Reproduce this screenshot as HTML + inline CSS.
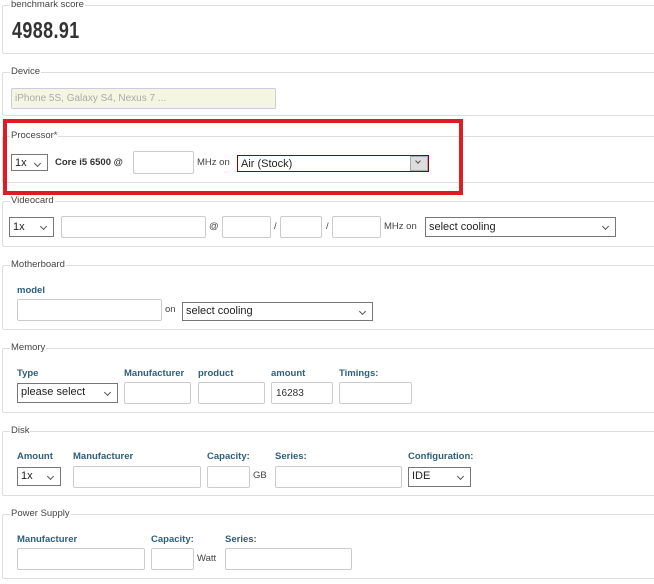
<!DOCTYPE html>
<html><head><meta charset="utf-8"><style>
*{box-sizing:border-box;margin:0;padding:0}
body{width:654px;height:584px;background:#fff;position:relative;overflow:hidden;font-family:"Liberation Sans",sans-serif;font-size:10px;color:#444}
.fs{position:absolute;left:2px;width:700px;border:1px solid #ddd;border-radius:2px}
.lg{position:absolute;font-size:9.5px;color:#444;background:#fff;padding:0 1px}
.a{position:absolute}
.in{position:absolute;border:1px solid #ccc;border-radius:2px;background:#fff}
.sel{position:absolute;border:1px solid #777;background:#fff;font-size:11px;color:#222;padding:2px 0 0 3px;line-height:15px;font-family:"Liberation Sans",sans-serif}
.sel:after{content:"";position:absolute;right:7px;top:6px;width:4px;height:4px;border-right:1px solid #555;border-bottom:1px solid #555;transform:rotate(45deg)}
.bl{position:absolute;font-weight:bold;color:#2e5f7c;font-size:9.5px}
.t{position:absolute;font-size:9.5px;color:#444}
</style></head><body>
<div class="fs" style="top:5px;height:49px"></div><div class="lg" style="left:10px;top:-1px">benchmark score</div>
<div class="a" style="left:12px;top:17px;font-size:23px;font-weight:bold;color:#333;transform:scaleX(0.78);transform-origin:left;letter-spacing:0.5px">4988.91</div>

<div class="fs" style="top:72px;height:44px"></div><div class="lg" style="left:10px;top:66px">Device</div>
<div class="in" style="left:11px;top:88px;width:265px;height:21px;background:#f5f6e1;border-color:#ccd;color:#aaa;font-size:10px;padding:4px 0 0 3px">iPhone 5S, Galaxy S4, Nexus 7 ...</div>

<div class="fs" style="top:136px;height:47px"></div><div class="lg" style="left:10px;top:130px">Processor*</div>
<div class="sel" style="left:11px;top:154px;width:37px;height:17px;padding-top:1px">1x</div>
<div class="t" style="left:55px;top:157px;font-weight:bold;color:#333">Core i5 6500 @</div>
<div class="in" style="left:133px;top:151px;width:61px;height:23px"></div>
<div class="t" style="left:197px;top:157px">MHz on</div>
<div class="sel" style="left:237px;top:155px;width:192px;height:17px;border-color:#800;padding-top:1px">Air (Stock)</div>
<div class="a" style="left:410px;top:156px;width:18px;height:15px;background:#ddd;border:1px solid #aaa"></div>
<div class="a" style="left:416px;top:159px;width:4px;height:4px;border-right:1px solid #555;border-bottom:1px solid #555;transform:rotate(45deg)"></div>

<div class="fs" style="top:201px;height:46px"></div><div class="lg" style="left:10px;top:195px">Videocard</div>
<div class="sel" style="left:9px;top:217px;width:45px;height:20px">1x</div>
<div class="in" style="left:61px;top:216px;width:145px;height:22px"></div>
<div class="t" style="left:209px;top:221px">@</div>
<div class="in" style="left:222px;top:216px;width:49px;height:22px"></div>
<div class="t" style="left:274px;top:221px">/</div>
<div class="in" style="left:280px;top:216px;width:42px;height:22px"></div>
<div class="t" style="left:326px;top:221px">/</div>
<div class="in" style="left:332px;top:216px;width:49px;height:22px"></div>
<div class="t" style="left:384px;top:221px">MHz on</div>
<div class="sel" style="left:425px;top:217px;width:191px;height:20px">select cooling</div>

<div class="fs" style="top:265px;height:65px"></div><div class="lg" style="left:10px;top:259px">Motherboard</div>
<div class="bl" style="left:17px;top:285px">model</div>
<div class="in" style="left:17px;top:299px;width:145px;height:22px"></div>
<div class="t" style="left:165px;top:304px">on</div>
<div class="sel" style="left:182px;top:302px;width:191px;height:19px;padding-top:1px">select cooling</div>

<div class="fs" style="top:348px;height:65px"></div><div class="lg" style="left:10px;top:342px">Memory</div>
<div class="bl" style="left:17px;top:368px">Type</div><div class="bl" style="left:124px;top:368px">Manufacturer</div><div class="bl" style="left:198px;top:368px">product</div><div class="bl" style="left:271px;top:368px">amount</div><div class="bl" style="left:339px;top:368px">Timings:</div>
<div class="sel" style="left:17px;top:383px;width:101px;height:20px;padding-top:1px">please select</div>
<div class="in" style="left:124px;top:382px;width:67px;height:22px"></div>
<div class="in" style="left:198px;top:382px;width:67px;height:22px"></div>
<div class="in" style="left:271px;top:382px;width:62px;height:22px;font-size:10px;color:#333;padding:5px 0 0 4px">16283</div>
<div class="in" style="left:339px;top:382px;width:73px;height:22px"></div>

<div class="fs" style="top:431px;height:65px"></div><div class="lg" style="left:10px;top:425px">Disk</div>
<div class="bl" style="left:17px;top:451px">Amount</div><div class="bl" style="left:73px;top:451px">Manufacturer</div><div class="bl" style="left:207px;top:451px">Capacity:</div><div class="bl" style="left:275px;top:451px">Series:</div><div class="bl" style="left:408px;top:451px">Configuration:</div>
<div class="sel" style="left:17px;top:467px;width:44px;height:19px;padding-top:1px">1x</div>
<div class="in" style="left:73px;top:466px;width:128px;height:22px"></div>
<div class="in" style="left:207px;top:466px;width:43px;height:22px"></div>
<div class="t" style="left:253px;top:470px">GB</div>
<div class="in" style="left:275px;top:466px;width:127px;height:22px"></div>
<div class="sel" style="left:408px;top:467px;width:63px;height:20px;padding-top:1px">IDE</div>

<div class="fs" style="top:514px;height:65px"></div><div class="lg" style="left:10px;top:508px">Power Supply</div>
<div class="bl" style="left:17px;top:534px">Manufacturer</div><div class="bl" style="left:151px;top:534px">Capacity:</div><div class="bl" style="left:225px;top:534px">Series:</div>
<div class="in" style="left:17px;top:548px;width:128px;height:22px"></div>
<div class="in" style="left:151px;top:548px;width:43px;height:22px"></div>
<div class="t" style="left:197px;top:553px">Watt</div>
<div class="in" style="left:225px;top:548px;width:127px;height:22px"></div>

<div class="a" style="left:3px;top:119px;width:460px;height:76px;border:4px solid #e01b24"></div>
</body></html>
